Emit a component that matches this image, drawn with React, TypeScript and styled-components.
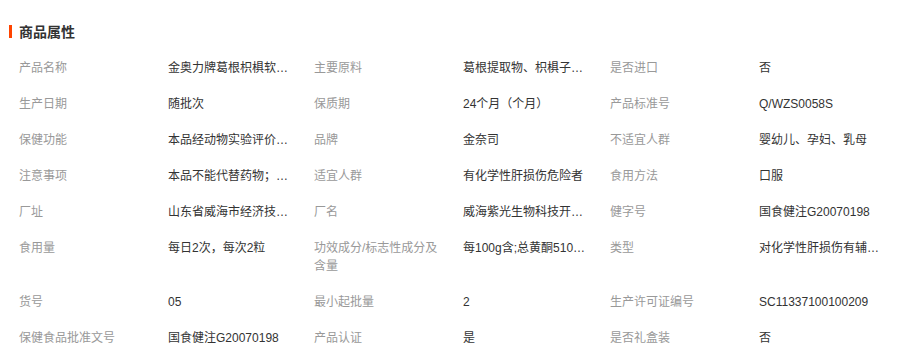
import styled, { createGlobalStyle } from 'styled-components';

type Prop = {
  label: string;
  value: string;
};

const rows: Prop[][] = [
  [
    { label: '产品名称', value: '金奥力牌葛根枳椇软胶囊' },
    { label: '主要原料', value: '葛根提取物、枳椇子提取物' },
    { label: '是否进口', value: '否' },
  ],
  [
    { label: '生产日期', value: '随批次' },
    { label: '保质期', value: '24个月（个月）' },
    { label: '产品标准号', value: 'Q/WZS0058S' },
  ],
  [
    { label: '保健功能', value: '本品经动物实验评价，具有对化学性肝损伤有辅助保护作用' },
    { label: '品牌', value: '金奈司' },
    { label: '不适宜人群', value: '婴幼儿、孕妇、乳母' },
  ],
  [
    { label: '注意事项', value: '本品不能代替药物；不宜超过推荐量' },
    { label: '适宜人群', value: '有化学性肝损伤危险者' },
    { label: '食用方法', value: '口服' },
  ],
  [
    { label: '厂址', value: '山东省威海市经济技术开发区' },
    { label: '厂名', value: '威海紫光生物科技开发有限公司' },
    { label: '健字号', value: '国食健注G20070198' },
  ],
  [
    { label: '食用量', value: '每日2次，每次2粒' },
    { label: '功效成分/标志性成分及含量', value: '每100g含;总黄酮510mg' },
    { label: '类型', value: '对化学性肝损伤有辅助保护作用' },
  ],
  [
    { label: '货号', value: '05' },
    { label: '最小起批量', value: '2' },
    { label: '生产许可证编号', value: 'SC11337100100209' },
  ],
  [
    { label: '保健食品批准文号', value: '国食健注G20070198' },
    { label: '产品认证', value: '是' },
    { label: '是否礼盒装', value: '否' },
  ],
];

// column widths so the label columns land at x = 19, 314, 610
const colWidths = [295, 296, 278];

const App = () => {
  return (
    <>
      <GlobalStyle />
      <Wrap>
        <Title>商品属性</Title>
        <Table>
          {rows.map((row, i) => (
            <Row key={i}>
              {row.map((p, j) => (
                <Cell key={j} $wide={colWidths[j]}>
                  <Label>{p.label}</Label>
                  <Value>{p.value}</Value>
                </Cell>
              ))}
            </Row>
          ))}
        </Table>
      </Wrap>
    </>
  );
};

const GlobalStyle = createGlobalStyle`
  body {
    margin: 0;
    background: #fff;
    font-family: "Liberation Sans", "Noto Sans CJK SC", sans-serif;
    font-size: 12px;
    color: #333;
    overflow: hidden;
  }
`;

const Wrap = styled.div`
  padding: 22px 0 0 9px;
`;

const Title = styled.h3`
  margin: 0;
  height: 20px;
  line-height: 20px;
  font-size: 14px;
  font-weight: bold;
  color: #333;
  position: relative;
  padding-left: 10px;

  &::before {
    content: '';
    position: absolute;
    left: 0;
    top: 3px;
    width: 3px;
    height: 13px;
    background: #ff4400;
  }
`;

const Table = styled.div`
  margin-top: 8px;
  padding-left: 10px;
`;

const Row = styled.div`
  display: flex;
`;

const Cell = styled.div<{ $wide: number }>`
  display: flex;
  flex-shrink: 0;
  width: ${(p) => p.$wide}px;
  padding: 9px 0;
  line-height: 18px;
`;

const Label = styled.div`
  width: 130px;
  margin-right: 19px;
  color: #999;
  flex-shrink: 0;
`;

const Value = styled.div`
  width: 124px;
  white-space: nowrap;
  overflow: hidden;
  text-overflow: ellipsis;
  color: #333;
`;

export default App;
